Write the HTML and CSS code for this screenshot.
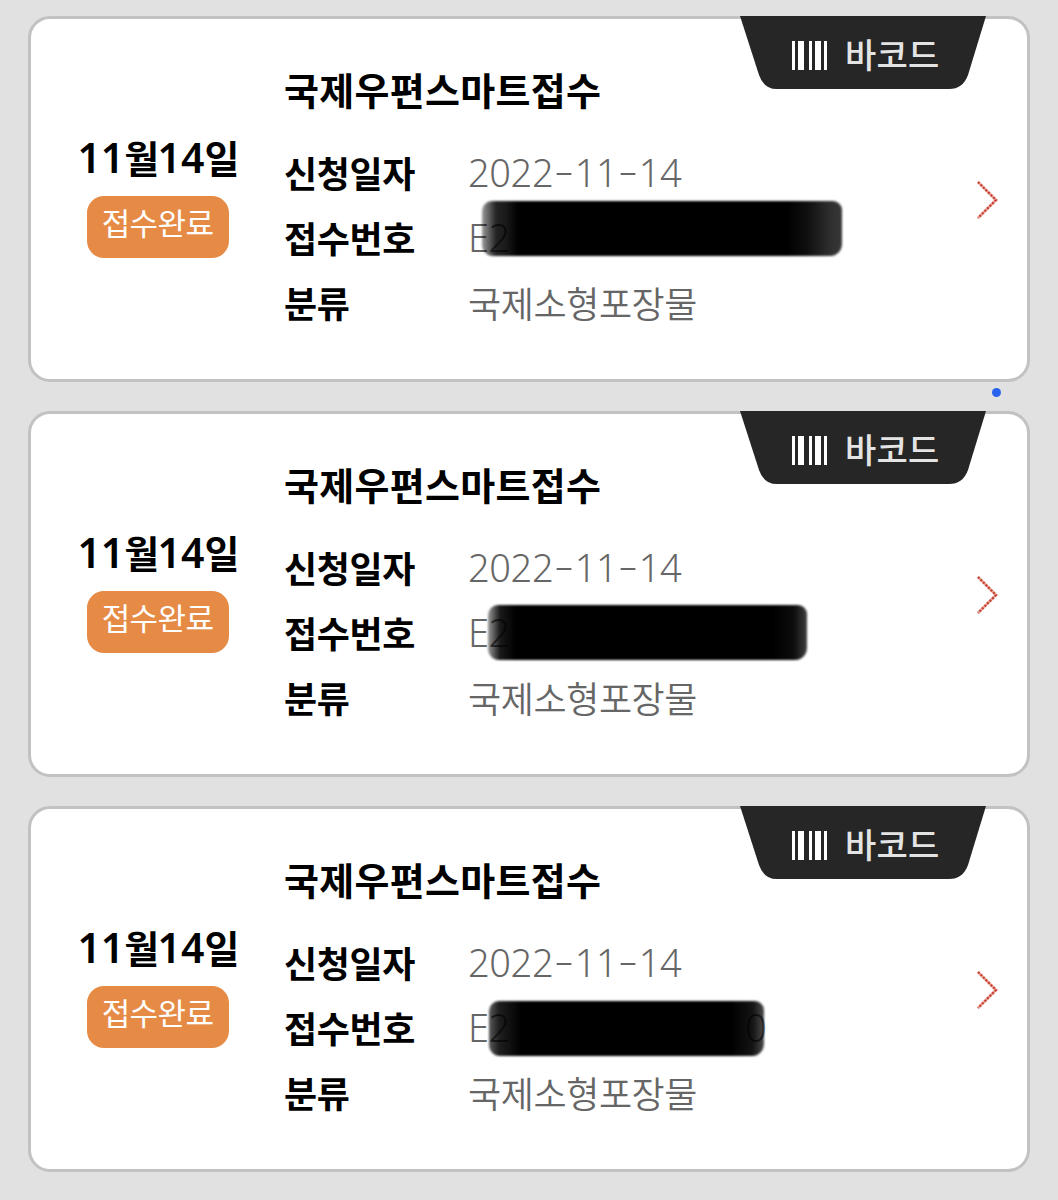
FILE: index.html
```html
<!DOCTYPE html>
<html lang="ko">
<head>
    <meta charset="UTF-8">
    <meta name="viewport" content="width=device-width, initial-scale=1.0">
    <title>국제우편스마트접수</title>
    <link rel="stylesheet" href="styles.css">
</head>
<body>
    <ul class="list">
        <li class="card">
            <div class="state">
                <p class="date"><span>11</span>월<span>14</span>일</p>
                <span class="badge">접수완료</span>
            </div>
            <div class="info">
                <h2>국제우편스마트접수</h2>
                <dl>
                    <dt>신청일자</dt>
                    <dd class="num">2022<i>-</i>11<i>-</i>14</dd>
                    <dt>접수번호</dt>
                    <dd class="num">E2<span class="mask mask1"></span></dd>
                    <dt>분류</dt>
                    <dd>국제소형포장물</dd>
                </dl>
            </div>
            <svg class="arrow" width="24" height="40" viewBox="0 0 24 40"><path d="M2 2L20 20L2 38"/><path class="dots" d="M2 2L20 20L2 38"/></svg>
            <div class="barcode">
                <svg class="tab" width="246" height="74" viewBox="0 0 246 74"><path d="M0 0H246L228 59Q223 73 209 73H37Q24 73 19 59Z"/></svg>
                <svg class="bars" width="36" height="30" viewBox="0 0 36 30"><path d="M0 0h3v29H0zM6 0h6v29H6zM17 0h3v29H17zM23 0h6v29h-6zM32 0h3v29h-3z"/></svg>
                <span>바코드</span>
            </div>
        </li>

        <li class="card">
            <div class="state">
                <p class="date"><span>11</span>월<span>14</span>일</p>
                <span class="badge">접수완료</span>
            </div>
            <div class="info">
                <h2>국제우편스마트접수</h2>
                <dl>
                    <dt>신청일자</dt>
                    <dd class="num">2022<i>-</i>11<i>-</i>14</dd>
                    <dt>접수번호</dt>
                    <dd class="num">E2<span class="mask mask2"></span></dd>
                    <dt>분류</dt>
                    <dd>국제소형포장물</dd>
                </dl>
            </div>
            <svg class="arrow" width="24" height="40" viewBox="0 0 24 40"><path d="M2 2L20 20L2 38"/><path class="dots" d="M2 2L20 20L2 38"/></svg>
            <div class="barcode">
                <svg class="tab" width="246" height="74" viewBox="0 0 246 74"><path d="M0 0H246L228 59Q223 73 209 73H37Q24 73 19 59Z"/></svg>
                <svg class="bars" width="36" height="30" viewBox="0 0 36 30"><path d="M0 0h3v29H0zM6 0h6v29H6zM17 0h3v29H17zM23 0h6v29h-6zM32 0h3v29h-3z"/></svg>
                <span>바코드</span>
            </div>
            <span class="dot"></span>
        </li>

        <li class="card">
            <div class="state">
                <p class="date"><span>11</span>월<span>14</span>일</p>
                <span class="badge">접수완료</span>
            </div>
            <div class="info">
                <h2>국제우편스마트접수</h2>
                <dl>
                    <dt>신청일자</dt>
                    <dd class="num">2022<i>-</i>11<i>-</i>14</dd>
                    <dt>접수번호</dt>
                    <dd class="num">E2<b>0</b><span class="mask mask3"></span></dd>
                    <dt>분류</dt>
                    <dd>국제소형포장물</dd>
                </dl>
            </div>
            <svg class="arrow" width="24" height="40" viewBox="0 0 24 40"><path d="M2 2L20 20L2 38"/><path class="dots" d="M2 2L20 20L2 38"/></svg>
            <div class="barcode">
                <svg class="tab" width="246" height="74" viewBox="0 0 246 74"><path d="M0 0H246L228 59Q223 73 209 73H37Q24 73 19 59Z"/></svg>
                <svg class="bars" width="36" height="30" viewBox="0 0 36 30"><path d="M0 0h3v29H0zM6 0h6v29H6zM17 0h3v29H17zM23 0h6v29h-6zM32 0h3v29h-3z"/></svg>
                <span>바코드</span>
            </div>
        </li>
    </ul>
</body>
</html>
```
FILE: styles.css
```css
* {
    margin: 0;
    padding: 0;
    box-sizing: border-box;
}

body {
    font-family: "Noto Sans CJK KR", sans-serif;
    background-color: #e1e1e1;
    color: #000;
}

.list {
    list-style: none;
    display: flex;
    flex-direction: column;
    gap: 29px;
    padding: 16px 28px 28px;
}

.card {
    position: relative;
    display: flex;
    height: 366px;
    background: #fff;
    border: 3px solid #c2c2c2;
    border-radius: 22px;
}

/* 날짜 / 상태 */
.state {
    width: 253px;
    padding-top: 108px;
    display: flex;
    flex-direction: column;
    align-items: center;
}

.date {
    height: 69px;
    line-height: 60px;
    font-size: 38px;
    font-weight: 700;
    white-space: nowrap;
    letter-spacing: -1.8px;
}

.date span {
    font-family: "Noto Sans", sans-serif;
    font-size: 41px;
    font-weight: 600;
    line-height: 1;
    letter-spacing: 0;
}

.badge {
    width: 142px;
    height: 62px;
    border-radius: 17px;
    background: #e68b46;
    color: #fff;
    font-size: 31px;
    line-height: 52px;
    text-align: center;
    letter-spacing: -0.6px;
}

/* 접수 정보 */
.info {
    padding-top: 40px;
}

.info h2 {
    font-size: 38px;
    line-height: 60px;
    font-weight: 700;
    letter-spacing: 0.3px;
    margin-bottom: 21px;
}

dl {
    display: grid;
    grid-template-columns: 184px 460px;
    grid-auto-rows: 65px;
    font-size: 36px;
    line-height: 65px;
}

dt {
    font-weight: 700;
    letter-spacing: -0.4px;
}

dd {
    position: relative;
    color: #666;
    font-weight: 350;
    letter-spacing: -0.4px;
}

.num {
    font-family: "Noto Sans", sans-serif;
    font-size: 38px;
    font-weight: 350;
    letter-spacing: -0.4px;
}

.num i {
    display: inline-block;
    width: 21.5px;
    text-align: center;
    font-style: normal;
    transform: translateY(-3px) scaleX(1.6);
}

.num b {
    position: absolute;
    left: 277px;
    font-weight: 350;
}

/* 번호 가림 */
.mask {
    position: absolute;
    height: 55px;
    border-radius: 10px 9px 12px 11px;
    filter: blur(0.8px);
}

.mask1 {
    left: 14px;
    top: -4px;
    width: 360px;
    background: linear-gradient(90deg, rgba(0,0,0,.4) 0, rgba(0,0,0,.86) 14px, rgba(0,0,0,.9) 24px, #000 36px, #000 305px, rgba(0,0,0,.94) 325px, rgba(0,0,0,.82) 348px, rgba(0,0,0,.78) 360px);
}

.mask2 {
    left: 20px;
    top: 5px;
    width: 319px;
    background: linear-gradient(90deg, rgba(0,0,0,.4) 0, rgba(0,0,0,.9) 12px, #000 28px, #000 285px, rgba(0,0,0,.95) 306px, rgba(0,0,0,.75) 319px);
}

.mask3 {
    left: 21px;
    top: 6px;
    width: 275px;
    background: linear-gradient(90deg, rgba(0,0,0,.65) 0, rgba(0,0,0,.88) 10px, #000 32px, #000 242px, rgba(0,0,0,.92) 264px, rgba(0,0,0,.7) 275px);
}

.arrow {
    position: absolute;
    right: 27px;
    top: 161px;
    fill: none;
    stroke: #e7a499;
    stroke-width: 2.6;
}

.arrow .dots {
    stroke: #c84435;
    stroke-width: 2.4;
    stroke-dasharray: 2 1.6;
}

/* 바코드 탭 */
.barcode {
    position: absolute;
    top: -3px;
    right: 41px;
    width: 246px;
    height: 74px;
    display: flex;
    align-items: flex-start;
    padding: 25px 0 0 52px;
    color: #e4e4e4;
    font-size: 34px;
    font-weight: 500;
    line-height: 26px;
}

.barcode span {
    position: relative;
    margin-left: 17px;
    letter-spacing: 0.2px;
}

.tab {
    position: absolute;
    left: 0;
    top: 0;
    fill: #262626;
}

.bars {
    position: relative;
    fill: #fff;
}

.dot {
    position: absolute;
    right: 26px;
    top: -26px;
    width: 9px;
    height: 9px;
    border-radius: 50%;
    background: #2962f0;
}
```
